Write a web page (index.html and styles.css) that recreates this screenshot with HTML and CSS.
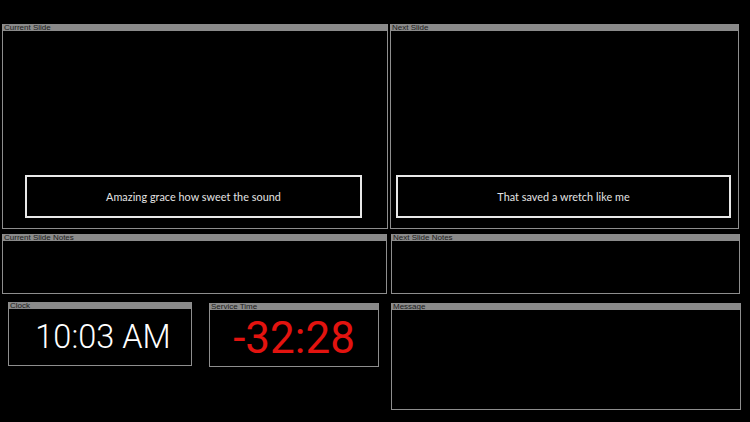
FILE: index.html
```html
<!DOCTYPE html>
<html>
<head>
<meta charset="utf-8">
<link rel="stylesheet" href="styles.css">
</head>
<body>
<div class="screen">
  <div class="row row-slides">
    <section class="panel slide slide-current">
      <div class="panel-head">Current Slide</div>
      <div class="panel-body slide-body">
        <div class="lyric lyric-current">Amazing grace how sweet the sound</div>
      </div>
    </section>
    <section class="panel slide slide-next">
      <div class="panel-head">Next Slide</div>
      <div class="panel-body slide-body">
        <div class="lyric lyric-next">That saved a wretch like me</div>
      </div>
    </section>
  </div>
  <div class="row row-notes">
    <section class="panel notes notes-current">
      <div class="panel-head">Current Slide Notes</div>
      <div class="panel-body"></div>
    </section>
    <section class="panel notes notes-next">
      <div class="panel-head">Next Slide Notes</div>
      <div class="panel-body"></div>
    </section>
  </div>
  <div class="row row-bottom">
    <section class="panel clock">
      <div class="panel-head">Clock</div>
      <div class="panel-body timer-body"><span class="clock-text">10:03 AM</span></div>
    </section>
    <section class="panel service">
      <div class="panel-head">Service Time</div>
      <div class="panel-body timer-body"><span class="service-text">-32:28</span></div>
    </section>
    <section class="panel message">
      <div class="panel-head">Message</div>
      <div class="panel-body"></div>
    </section>
  </div>
</div>
</body>
</html>
```
FILE: styles.css
```css
html, body {
  margin: 0;
  padding: 0;
  background: #000;
}
body {
  width: 750px;
  height: 422px;
  overflow: hidden;
  font-family: "Liberation Sans", Arial, sans-serif;
}
.screen {
  padding-top: 24px;
}
.row {
  display: flex;
  align-items: flex-start;
}
.panel {
  box-sizing: border-box;
  border: 1px solid #8e8e8e;
  border-top: none;
  display: flex;
  flex-direction: column;
  background: #000;
}
.panel-head {
  background: #8a8a8a;
  color: #1a1a1a;
  font-size: 8px;
  line-height: 7px;
  height: 7px;
  padding-left: 1px;
  white-space: nowrap;
  overflow: hidden;
}
.panel-body {
  flex: 1;
}

/* slides row */
.row-slides {
  height: 205px;
}
.slide {
  height: 205px;
}
.slide-current {
  margin-left: 2px;
  width: 386px;
}
.slide-next {
  margin-left: 2px;
  width: 349px;
}
.slide-body {
  display: flex;
  flex-direction: column;
  justify-content: flex-end;
}
.lyric {
  box-sizing: border-box;
  height: 43px;
  border: 2px solid #e8e8e8;
  color: #e4e4e4;
  font-family: Lato, "Open Sans", sans-serif;
  font-size: 10.8px;
  letter-spacing: 0.05px;
  display: flex;
  align-items: center;
  justify-content: center;
  margin-bottom: 10px;
}
.lyric-current {
  margin-left: 22px;
  margin-right: 25px;
}
.lyric-next {
  margin-left: 5px;
  margin-right: 7px;
}

/* notes row */
.row-notes {
  margin-top: 5px;
  height: 60px;
}
.notes {
  height: 60px;
}
.notes-current {
  margin-left: 2px;
  width: 385px;
}
.notes-next {
  margin-left: 4px;
  width: 349px;
}

/* bottom row */
.row-bottom {
  margin-top: 8px;
}
.clock {
  margin-left: 8px;
  width: 184px;
  height: 64px;
}
.service {
  margin-left: 17px;
  margin-top: 1px;
  width: 170px;
  height: 64px;
}
.message {
  margin-left: 12px;
  margin-top: 1px;
  width: 350px;
  height: 107px;
}
.timer-body {
  display: flex;
  align-items: center;
  justify-content: center;
}
.clock-text {
  color: #fff;
  font-family: Roboto, "Liberation Sans", sans-serif;
  font-weight: 300;
  font-size: 32.5px;
  padding-left: 6px;
  margin-top: 0px;
}
.service-text {
  color: #e3130f;
  font-family: Roboto, "Liberation Sans", sans-serif;
  font-weight: 400;
  font-size: 44px;
  margin-top: -1px;
}
```
